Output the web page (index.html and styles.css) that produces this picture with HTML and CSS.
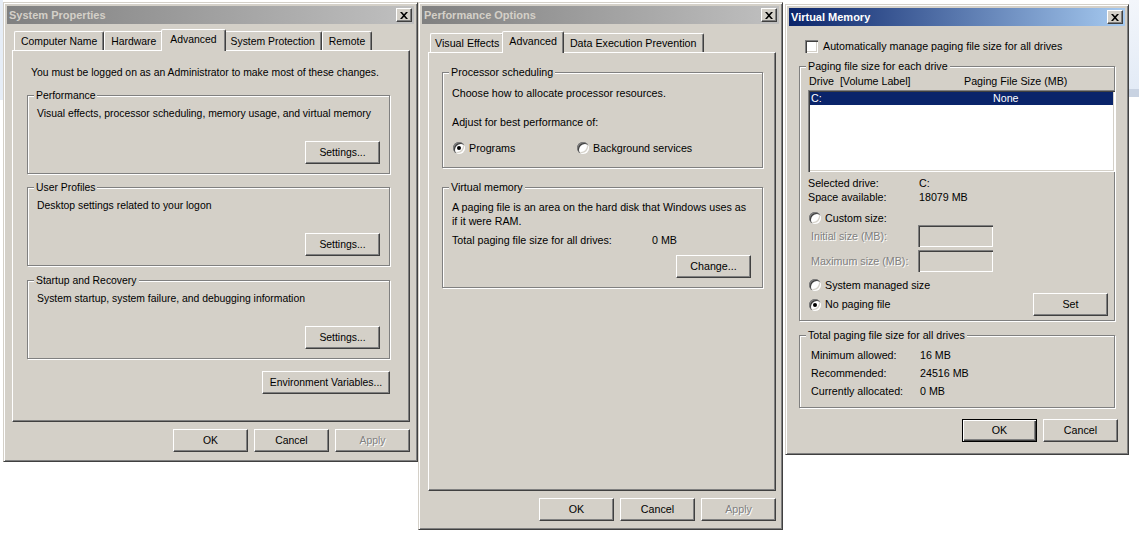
FILE: index.html
```html
<!DOCTYPE html>
<html lang="en">
<head>
    <meta charset="UTF-8">
    <title>System Properties - Virtual Memory</title>
    <link rel="stylesheet" href="styles.css">
</head>
<body>
    <div class="desk-edge edge-left"></div>
    <div class="desk-edge edge-right"></div>

    <!-- System Properties -->
    <div class="window sys">
        <div class="titlebar">
            <span class="title">System Properties</span>
            <span class="close"><svg width="8" height="7" viewBox="0 0 8 7"><path d="M0 0h2l2 2.2L6 0h2L5 3.5 8 7H6L4 4.8 2 7H0l3-3.5z"/></svg></span>
        </div>
        <div class="tabs">
            <div class="tab">Computer Name</div>
            <div class="tab">Hardware</div>
            <div class="tab sel">Advanced</div>
            <div class="tab">System Protection</div>
            <div class="tab">Remote</div>
        </div>
        <div class="panel">
            <p class="intro">You must be logged on as an Administrator to make most of these changes.</p>
            <fieldset class="group sys-group">
                <legend>Performance</legend>
                <p class="desc">Visual effects, processor scheduling, memory usage, and virtual memory</p>
                <div class="btn-row"><button class="btn">Settings...</button></div>
            </fieldset>
            <fieldset class="group sys-group">
                <legend>User Profiles</legend>
                <p class="desc">Desktop settings related to your logon</p>
                <div class="btn-row"><button class="btn">Settings...</button></div>
            </fieldset>
            <fieldset class="group sys-group last">
                <legend>Startup and Recovery</legend>
                <p class="desc">System startup, system failure, and debugging information</p>
                <div class="btn-row"><button class="btn">Settings...</button></div>
            </fieldset>
            <div class="btn-row env"><button class="btn wide">Environment Variables...</button></div>
        </div>
        <div class="dlg-buttons">
            <button class="btn">OK</button>
            <button class="btn">Cancel</button>
            <button class="btn disabled">Apply</button>
        </div>
    </div>

    <!-- Performance Options -->
    <div class="window perf">
        <div class="titlebar">
            <span class="title">Performance Options</span>
            <span class="close"><svg width="8" height="7" viewBox="0 0 8 7"><path d="M0 0h2l2 2.2L6 0h2L5 3.5 8 7H6L4 4.8 2 7H0l3-3.5z"/></svg></span>
        </div>
        <div class="tabs">
            <div class="tab">Visual Effects</div>
            <div class="tab sel">Advanced</div>
            <div class="tab long">Data Execution Prevention</div>
        </div>
        <div class="panel">
            <fieldset class="group perf-group">
                <legend>Processor scheduling</legend>
                <p class="line first">Choose how to allocate processor resources.</p>
                <p class="line adjust">Adjust for best performance of:</p>
                <div class="radio-row">
                    <label class="opt prog"><span class="radio on"></span>Programs</label>
                    <label class="opt"><span class="radio"></span>Background services</label>
                </div>
            </fieldset>
            <fieldset class="group perf-group vm">
                <legend>Virtual memory</legend>
                <p class="line first">A paging file is an area on the hard disk that Windows uses as<br>if it were RAM.</p>
                <div class="kv total"><span class="key">Total paging file size for all drives:</span><span>0 MB</span></div>
                <div class="btn-row change"><button class="btn">Change...</button></div>
            </fieldset>
        </div>
        <div class="dlg-buttons">
            <button class="btn">OK</button>
            <button class="btn">Cancel</button>
            <button class="btn disabled">Apply</button>
        </div>
    </div>

    <!-- Virtual Memory -->
    <div class="window vmem active">
        <div class="titlebar">
            <span class="title">Virtual Memory</span>
            <span class="close"><svg width="8" height="7" viewBox="0 0 8 7"><path d="M0 0h2l2 2.2L6 0h2L5 3.5 8 7H6L4 4.8 2 7H0l3-3.5z"/></svg></span>
        </div>
        <div class="vm-body">
            <label class="check-row"><span class="checkbox"></span>Automatically manage paging file size for all drives</label>

            <fieldset class="group drives">
                <legend>Paging file size for each drive</legend>
                <div class="list-head"><span class="col1">Drive&nbsp; [Volume Label]</span><span>Paging File Size (MB)</span></div>
                <div class="listbox">
                    <div class="list-row selected"><span class="col1">C:</span><span>None</span></div>
                </div>
                <div class="kv info"><span class="key">Selected drive:</span><span>C:</span></div>
                <div class="kv"><span class="key">Space available:</span><span>18079 MB</span></div>
                <label class="opt custom"><span class="radio"></span>Custom size:</label>
                <div class="size-row">
                    <span class="size-label disabled-text">Initial size (MB):</span>
                    <span class="textbox"></span>
                </div>
                <div class="size-row max">
                    <span class="size-label disabled-text">Maximum size (MB):</span>
                    <span class="textbox"></span>
                </div>
                <label class="opt managed"><span class="radio"></span>System managed size</label>
                <div class="set-row">
                    <label class="opt"><span class="radio on"></span>No paging file</label>
                    <button class="btn">Set</button>
                </div>
            </fieldset>

            <fieldset class="group totals">
                <legend>Total paging file size for all drives</legend>
                <div class="kv t"><span class="key">Minimum allowed:</span><span>16 MB</span></div>
                <div class="kv t"><span class="key">Recommended:</span><span>24516 MB</span></div>
                <div class="kv t"><span class="key">Currently allocated:</span><span>0 MB</span></div>
            </fieldset>

            <div class="dlg-buttons vm-buttons">
                <button class="btn default">OK</button>
                <button class="btn">Cancel</button>
            </div>
        </div>
    </div>
</body>
</html>
```

FILE: styles.css
```css
* {
    box-sizing: border-box;
}

body {
    margin: 0;
    width: 1139px;
    height: 537px;
    position: relative;
    overflow: hidden;
    background-color: #ffffff;
    font-family: "Liberation Sans", Arial, sans-serif;
    font-size: 10.7px;
    line-height: 13px;
    color: #000;
}

p {
    margin: 0;
    white-space: nowrap;
}

/* bits of other windows peeking out behind */
.desk-edge {
    position: absolute;
    top: 0;
}

.edge-left {
    left: 0;
    width: 3px;
    height: 100px;
    background-color: #e6edf6;
}

.edge-right {
    left: 1129px;
    width: 10px;
    height: 97px;
    background: linear-gradient(#f3f6fb, #e3ebf6);
    border-bottom: 8px solid #c9d3e2;
}

/* ---- classic window frame ---- */
.window {
    position: absolute;
    display: flex;
    flex-direction: column;
    padding: 3px;
    background-color: #d4d0c8;
    border: 1px solid;
    border-color: #d4d0c8 #404040 #404040 #d4d0c8;
    box-shadow: inset 1px 1px 0 #fff, inset -1px -1px 0 #808080;
}

.sys {
    left: 3px;
    top: 2px;
    width: 415px;
    height: 460px;
    font-size: 10.4px;
}

.perf {
    left: 418px;
    top: 2px;
    width: 365px;
    height: 528px;
}

.vmem {
    left: 785px;
    top: 4px;
    width: 344px;
    height: 451px;
}

.titlebar {
    height: 18px;
    flex-shrink: 0;
    display: flex;
    align-items: center;
    justify-content: space-between;
    padding: 0 2px 0 2px;
    background: linear-gradient(to right, #808080, #c0c0c0);
    color: #d4d0c8;
    font-size: 11px;
    font-weight: bold;
}

.active .titlebar {
    background: linear-gradient(to right, #0a246a, #a6caf0);
    color: #fff;
}

.close {
    width: 16px;
    height: 14px;
    display: flex;
    align-items: center;
    justify-content: center;
    background-color: #d4d0c8;
    border: 1px solid;
    border-color: #fff #404040 #404040 #fff;
    box-shadow: inset -1px -1px 0 #808080;
}

.close svg {
    fill: #000;
    margin-left: -1px;
}

/* ---- tabs ---- */
.tabs {
    display: flex;
    align-items: flex-end;
    height: 21px;
    padding-left: 2px;
    flex-shrink: 0;
}

.sys .tabs {
    margin: 5px 4px 0 5px;
}

.perf .tabs {
    margin: 7px 3px 0 6px;
}

.tab {
    height: 19px;
    padding: 0 4px;
    display: flex;
    align-items: center;
    border: 1px solid;
    border-bottom: none;
    border-color: #fff #404040 transparent #fff;
    border-radius: 2px 2px 0 0;
    box-shadow: inset -1px 0 0 #808080;
    white-space: nowrap;
}

.sys .tab {
    padding: 0 6px;
}

.tab.long {
    padding: 0 7px;
}

.tab.sel {
    position: relative;
    z-index: 1;
    height: 22px;
    margin: 0 -2px -1px;
    padding: 0 6px 3px;
    background-color: #d4d0c8;
}

.sys .tab.sel {
    padding: 0 8px 3px;
}

.panel {
    display: flex;
    flex-direction: column;
    border: 1px solid;
    border-color: #fff #404040 #404040 #fff;
    box-shadow: inset -1px -1px 0 #808080;
}

.sys .panel {
    height: 372px;
    margin: 0 4px 0 5px;
    padding: 15px 19px 0 14px;
}

.perf .panel {
    height: 439px;
    margin: 0 3px 0 6px;
    padding: 13px 12px 0 13px;
}

/* ---- group boxes ---- */
.group {
    margin: 0;
    min-width: 0;
    border: 1px solid #808080;
    box-shadow: inset 1px 1px 0 #fff, 1px 1px 0 #fff;
}

.group legend {
    padding: 0 2px;
    background-color: #d4d0c8;
    line-height: 13px;
}

.intro {
    margin-left: 4px;
}

.sys-group {
    height: 85px;
    margin-top: 7px;
    padding: 0 9px 9px 9px;
}

.intro + .sys-group {
    margin-top: 10px;
}

.sys-group.last {
    margin-top: 8px;
}

.sys-group legend {
    margin-left: -3px;
}

.desc {
    margin-top: 5px;
}

.btn-row {
    display: flex;
    justify-content: flex-end;
}

.sys-group .btn-row {
    margin-top: 21px;
}

.btn-row.env {
    margin-top: 12px;
}

/* ---- buttons ---- */
.btn {
    width: 75px;
    height: 23px;
    padding: 0;
    font: inherit;
    color: #000;
    background-color: #d4d0c8;
    border: 1px solid;
    border-color: #fff #404040 #404040 #fff;
    box-shadow: inset -1px -1px 0 #808080;
    border-radius: 0;
}

.btn.wide {
    width: 128px;
}

.btn.disabled,
.disabled-text {
    color: #808080;
    text-shadow: 1px 1px 0 #fff;
}

.btn.default {
    border: 1px solid #000;
    box-shadow: inset 1px 1px 0 #fff, inset -1px -1px 0 #404040, inset -2px -2px 0 #808080;
}

.dlg-buttons {
    display: flex;
    justify-content: flex-end;
    gap: 6px;
    margin-top: 7px;
}

.sys .dlg-buttons {
    margin-right: 4px;
}

.perf .dlg-buttons {
    margin-right: 3px;
}

/* ---- performance options ---- */
.perf-group {
    padding: 0 11px 12px 9px;
}

.perf-group legend {
    margin-left: -3px;
}

.perf-group.vm {
    margin-top: 13px;
    padding-bottom: 9px;
}

.line {
    line-height: 14px;
}

.line.first {
    margin-top: 7px;
}

.vm .line.first {
    margin-top: 6px;
}

.line.adjust {
    margin-top: 15px;
}

.radio-row {
    display: flex;
    margin-top: 12px;
    margin-left: 1px;
}

.opt {
    display: flex;
    align-items: center;
    gap: 4px;
    height: 14px;
}

.opt.prog {
    width: 124px;
}

.radio {
    position: relative;
    width: 12px;
    height: 12px;
    flex-shrink: 0;
    border-radius: 50%;
    background-color: #fff;
    box-shadow: inset 1px 1px 0 #808080, inset 2px 2px 0 #404040, inset -1px -1px 0 #fff, inset -2px -2px 0 #d4d0c8;
}

.radio.on::after {
    content: "";
    position: absolute;
    left: 4px;
    top: 4px;
    width: 4px;
    height: 4px;
    border-radius: 50%;
    background-color: #000;
}

.kv {
    display: flex;
    line-height: 14px;
    white-space: nowrap;
}

.kv.total {
    margin-top: 5px;
}

.kv.total .key {
    width: 200px;
}

.btn-row.change {
    margin-top: 8px;
}

/* ---- virtual memory ---- */
.vm-body {
    display: flex;
    flex-direction: column;
    padding: 0 10px;
}

.check-row {
    display: flex;
    align-items: center;
    gap: 5px;
    margin: 14px 0 0 6px;
    height: 13px;
}

.checkbox {
    width: 13px;
    height: 13px;
    background-color: #fff;
    box-shadow: inset 1px 1px 0 #808080, inset 2px 2px 0 #404040, inset -1px -1px 0 #fff, inset -2px -2px 0 #d4d0c8;
}

.drives {
    margin-top: 7px;
    padding: 0 6px 4px 8px;
}

.drives legend {
    margin-left: -2px;
}

.list-head {
    display: flex;
    margin: 2px 0 0 1px;
}

.list-head .col1 {
    width: 155px;
}

.listbox {
    height: 82px;
    margin: 2px -7px 0 0;
    padding: 2px;
    background-color: #fff;
    box-shadow: inset 1px 1px 0 #808080, inset 2px 2px 0 #404040, inset -1px -1px 0 #fff, inset -2px -2px 0 #d4d0c8;
}

.list-row {
    display: flex;
    height: 13px;
    padding-left: 1px;
}

.list-row .col1 {
    width: 182px;
}

.list-row.selected {
    background-color: #0a246a;
    color: #fff;
}

.kv.info {
    margin-top: 4px;
}

.kv .key {
    width: 111px;
}

.opt.custom {
    margin: 7px 0 0 1px;
}

.size-row {
    display: flex;
    align-items: center;
    height: 22px;
    margin-left: 3px;
}

.size-row.max {
    margin-top: 3px;
}

.size-label {
    width: 107px;
}

.textbox {
    width: 75px;
    height: 22px;
    background-color: #d4d0c8;
    box-shadow: inset 1px 1px 0 #808080, inset 2px 2px 0 #404040, inset -1px -1px 0 #fff, inset -2px -2px 0 #d4d0c8;
}

.opt.managed {
    margin: 6px 0 0 1px;
}

.set-row {
    display: flex;
    align-items: center;
    justify-content: space-between;
    margin: 1px 0 0 1px;
}

.totals {
    margin-top: 8px;
    padding: 0 6px 7px 11px;
}

.totals legend {
    margin-left: -5px;
}

.kv.t {
    line-height: 18px;
}

.kv.t:first-of-type {
    margin-top: 4px;
}

.kv.t .key {
    width: 109px;
}

.vm-buttons {
    margin: 11px -3px 0 0;
}
```
